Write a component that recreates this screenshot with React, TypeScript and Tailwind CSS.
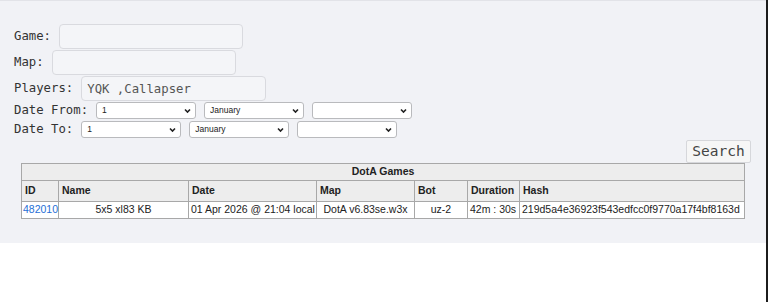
import React from 'react';

const MONO = { fontFamily: '"DejaVu Sans Mono", "Liberation Mono", monospace' };

function Chevron() {
  return (
    <svg
      className="pointer-events-none absolute right-[5px] top-1/2 -translate-y-1/2"
      width="7"
      height="5"
      viewBox="0 0 7 5"
    >
      <path d="M1 1 L3.5 3.5 L6 1" fill="none" stroke="#222" strokeWidth="1.6" />
    </svg>
  );
}

function Select({ value }: { value: string }) {
  return (
    <div className="relative inline-block">
      <select
        defaultValue={value}
        className="block h-[17px] w-[100px] appearance-none rounded-[3px] border border-[#b9babd] bg-white pl-[5px] text-[8.5px] text-[#222] font-['Liberation_Sans',Arial,sans-serif]"
      >
        <option value={value}>{value}</option>
      </select>
      <Chevron />
    </div>
  );
}

function Field({ label, width, value }: { label: string; width: string; value?: string }) {
  return (
    <div className="flex items-start gap-2 h-[26px]">
      <span className="text-[12.3px] leading-[25px] text-[#333]" style={MONO}>{label}</span>
      <input
        defaultValue={value}
        className={`${width} h-[25px] rounded-[4px] border border-[#d9dadf] bg-[#f4f5f8] px-[5px] text-[12.3px] text-[#555] outline-none`}
        style={MONO}
      />
    </div>
  );
}

function DateRow({ label }: { label: string }) {
  return (
    <div className="flex items-start gap-2 h-[19px]">
      <span className="text-[12.3px] leading-[17px] text-[#333]" style={MONO}>{label}</span>
      <Select value="1" />
      <Select value="January" />
      <Select value="" />
    </div>
  );
}

const COLS = [
  { label: 'ID', w: 'w-[37px]' },
  { label: 'Name', w: 'w-[130px]' },
  { label: 'Date', w: 'w-[128px]' },
  { label: 'Map', w: 'w-[98px]' },
  { label: 'Bot', w: 'w-[53px]' },
  { label: 'Duration', w: 'w-[52px]' },
  { label: 'Hash', w: 'w-[225px]' },
];

export default function App() {
  return (
    <div className="flex min-h-[302px] w-[768px] bg-white">
      <div className="flex-1">
        <div className="border-t border-[#e2e3e8] bg-[#f1f2f6] pl-[14px] pt-[23px] pb-[24px] pr-[15px]">
          <Field label="Game:" width="w-[184px]" />
          <Field label="Map:" width="w-[184px]" />
          <Field label="Players:" width="w-[185px]" value="YQK ,Callapser" />
          <DateRow label="Date From:" />
          <DateRow label="Date To:" />
          <div className="flex justify-end">
            <button
              className="h-[23px] w-[65px] rounded-[2px] border border-[#d6d7db] bg-[#f6f6f6] text-[14.5px] text-[#444]"
              style={MONO}
            >
              Search
            </button>
          </div>
          <table
            className="ml-[7px] w-[723px] table-fixed border-collapse border border-[#9c9c9c] text-[10.5px] text-[#222]"
            style={{ fontFamily: '"Liberation Sans", Arial, sans-serif' }}
          >
            <colgroup>
              {COLS.map((c) => (
                <col key={c.label} className={c.w} />
              ))}
            </colgroup>
            <thead>
              <tr className="h-[17px] bg-[#ededed]">
                <th colSpan={7} className="border border-[#a8a8a8] text-center font-bold">
                  DotA Games
                </th>
              </tr>
              <tr className="h-[21px] bg-[#ededed]">
                {COLS.map((c) => (
                  <th key={c.label} className="border border-[#a8a8a8] px-[3px] text-left font-bold">
                    {c.label}
                  </th>
                ))}
              </tr>
            </thead>
            <tbody>
              <tr className="h-[17px] bg-white">
                <td className="border border-[#a8a8a8] px-[1px] text-[#1f6fd6]">482010</td>
                <td className="border border-[#a8a8a8] text-center">5x5 xl83 KB</td>
                <td className="border border-[#a8a8a8] px-[2px] whitespace-nowrap">01 Apr 2026 @ 21:04 local</td>
                <td className="border border-[#a8a8a8] text-center whitespace-nowrap">DotA v6.83se.w3x</td>
                <td className="border border-[#a8a8a8] text-center">uz-2</td>
                <td className="border border-[#a8a8a8] px-[2px] whitespace-nowrap">42m : 30s</td>
                <td className="border border-[#a8a8a8] px-[2px] whitespace-nowrap">219d5a4e36923f543edfcc0f9770a17f4bf8163d</td>
              </tr>
            </tbody>
          </table>
        </div>
      </div>
      <div className="w-[2px] bg-[#1c1c1c]" />
    </div>
  );
}
